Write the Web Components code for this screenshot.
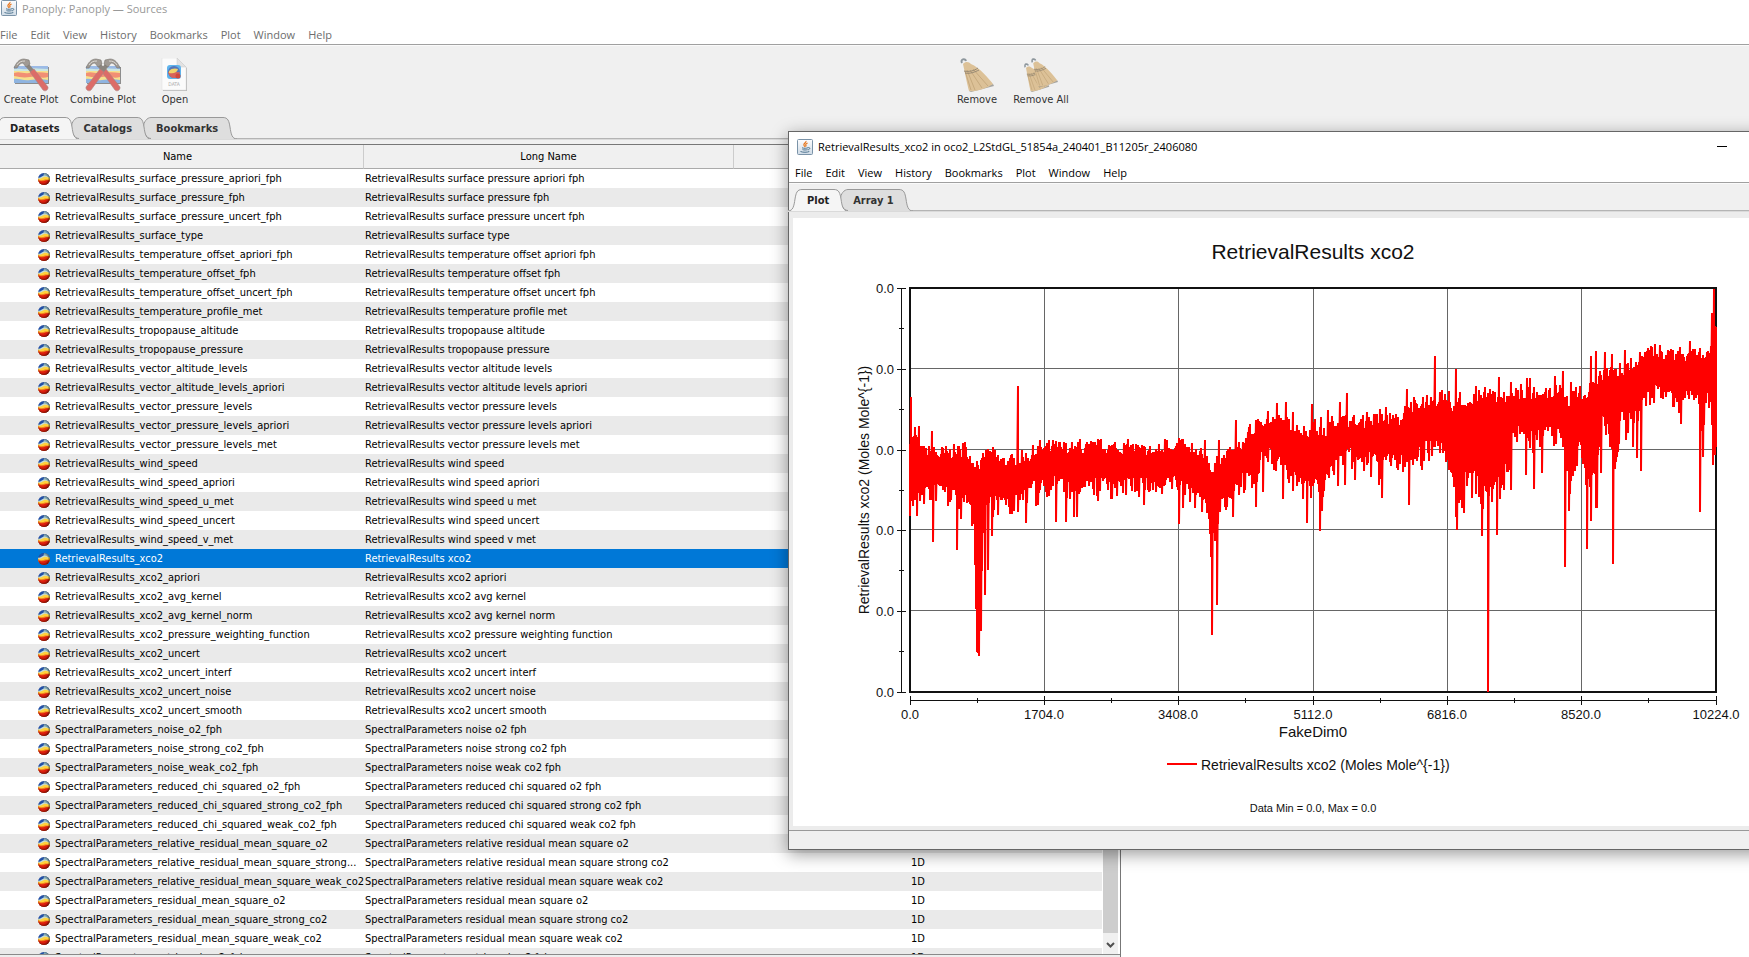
<!DOCTYPE html>
<html lang="en">
<head>
<meta charset="utf-8">
<title>Panoply: Panoply — Sources</title>
<style>
  html, body {
    margin: 0;
    height: 100%;
    overflow: hidden;
    background: #fff;
  }
  body {
    --ui: "Open Sans", "Noto Sans", sans-serif;
    --small: "DejaVu Sans Condensed", "DejaVu Sans", "Noto Sans", sans-serif;
    font: 11px/16px var(--ui);
    color: #000;
  }
</style>
</head>
<body>
<sources-window></sources-window>
<plot-window></plot-window>

<script>
(() => {
  const define = (name, html, init) => {
    const template = document.createElement('template');
    template.innerHTML = html;
    customElements.define(name, class extends HTMLElement {
      constructor() {
        super();
        this.attachShadow({ mode: 'open' });
        this.shadowRoot.appendChild(template.content.cloneNode(true));
      }

      connectedCallback() {
        if (init) init(this, this.shadowRoot);
      }
    });
  };

  define('java-icon', `
    <style>
      :host { display: block; width: 16px; height: 16px; }
      svg { display: block; }
    </style>
    <svg width="16" height="16" viewBox="0 0 16 16" fill="none" aria-hidden="true">
      <defs>
        <linearGradient id="g" x2="0" y2="1">
          <stop offset="0" stop-color="#fdfdfe"/><stop offset="1" stop-color="#cfdbe6"/>
        </linearGradient>
      </defs>
      <rect x=".5" y=".5" width="15" height="15" rx="1" fill="url(#g)" stroke="#7a93a8"/>
      <path d="M9 2c.6 1.800-3.200 2.500-2 4.400l1.200 1.600M10.600 4C8.800 4.700 8 5.600 9.300 7.300" stroke="#e8771d" stroke-width="1.200"/>
      <path d="M5 8.800c2 .7 4.500.6 6-.1M5.500 10.600c1.500.5 3.500.5 5 0M3.500 12.500c2.300 1 6.700 1 8.800 0M11.200 8.600c2.400-.4 2 1.900-.4 2.300" stroke="#4f7590"/>
    </svg>
  `);

  define('menu-strip', `
    <style>
      :host {
        display: block;
        border-bottom: 1px solid #a0a0a0;
        background: #fff;
      }
      nav {
        display: flex;
        gap: 13px;
        height: 20px;
        padding-left: var(--menu-inset, 0);
      }
      button {
        border: 0;
        padding: 0;
        background: none;
        color: inherit;
        font: 11px/22px var(--ui);
        white-space: nowrap;
      }
    </style>
    <nav></nav>
  `, (el, root) => {
    const names = ['File', 'Edit', 'View', 'History', 'Bookmarks', 'Plot', 'Window', 'Help'];
    root.querySelector('nav').innerHTML = names.map(n => `<button type="button">${n}</button>`).join('');
  });

  // Tabs overlap: every tab sits on top of the one that follows it.
  define('tab-strip', `
    <style>
      :host { display: block; }
      .tabs {
        display: flex;
        height: 22px;
        background: linear-gradient(#b4b4b4, #b4b4b4) 0 21px / 100% 1px no-repeat;
        border-bottom: 1px solid #dadada;
      }
      button {
        display: flex;
        position: relative;
        border: 0;
        padding: 0;
        margin: 0 0 0 -8px;
        background: none;
        color: #333;
        font: bold 11px/22px "DejaVu Sans Condensed", "DejaVu Sans", sans-serif;
        --fill: #dedede;
      }
      button:first-child { margin-left: 0; }
      button[aria-selected="true"] { --fill: #f5f5f5; color: #222; }
      span {
        box-sizing: border-box;
        height: 22px;
        padding: 0 5px;
        border-top: 1px solid #999;
        background: var(--fill);
        white-space: nowrap;
        line-height: 22px;
      }
      svg { display: block; flex: none; stroke: #999; }
      .f { fill: var(--fill); stroke: none; }
      .l { fill: none; }
    </style>
    <div class="tabs" role="tablist"></div>
  `, (el, root) => {
    const flare = 'M0 22C5 22 6 17 7 10C8 4 9 .5 14 .5';
    const inner = 'M8 21.500C3 21.500 .5 15 .5 10C.5 5 4 .5 8 .5';
    const names = el.getAttribute('tabs').split(',');
    root.querySelector('.tabs').innerHTML = names.map((name, i) => {
      const left = i === 0
        ? `<svg width="14" height="22"><path class="f" d="${flare}V22z"/><path class="l" d="${flare}"/></svg>`
        : `<svg width="8" height="22"><path class="f" d="${inner}z"/><path class="l" d="${inner}"/></svg>`;
      return `<button type="button" role="tab" aria-selected="${i === 0}" style="z-index:${names.length - i}">
        ${left}<span>${name}</span><svg width="14" height="22"><g transform="matrix(-1 0 0 1 14 0)"><path class="f" d="${flare}V22z"/><path class="l" d="${flare}"/></g></svg></button>`;
    }).join('');
  });

  define('tool-button', `
    <style>
      :host { display: block; flex: none; width: 72px; }
      button {
        display: flex;
        flex-direction: column;
        align-items: center;
        width: 100%;
        border: 0;
        padding: 0;
        background: none;
        color: #333;
        font: 11px/16px var(--small);
        white-space: nowrap;
      }
      ::slotted(svg) { display: block; width: 36px; height: 34px; }
    </style>
    <button type="button"><slot name="icon"></slot><slot></slot></button>
  `);

  const band = `
    <path d="M2 9h34v17H2z" fill="#8d8d8d"/>
    <path d="M1 8h34v17H1z" fill="#f6e08e"/>
    <path d="M1 8h34v3c-5 2-9-1-15 0s-13 1-19 0z" fill="#9cbbe6"/>
    <path d="M1 11c6-1 9 1 16 0s12 0 18 0v2H1z" fill="#cbe6e2"/>
    <path d="M1 15c6-2 9 1 15 0s13-1 19 0v4c-6 2-11-1-18 0s-10 0-16-1z" fill="#f28f74"/>
    <path d="M1 21c5-1 9 2 16 1s13-1 18 0v3H1z" fill="#8fb4e0"/>`;
  const hammer = `
    <path d="M13 9l3-3 5 6-3 3z" fill="#8b857e"/>
    <path d="M17 14l4-3 14 18c.5 3-3 5-5 3z" fill="#dc6c68" stroke="#a98481" stroke-width=".6"/>
    <path d="M1 10C3 5 6 1 11 1l5 1 1 4-4 3-3-4C7 5 6 7 4 10z" fill="#a09a94" stroke="#77736e" stroke-width=".6"/>
    <path d="M4 7c2-3 4-4 8-4" fill="none" stroke="#dad7d2"/>`;
  const broom = `
    <path d="M10 33L34 26l1 2-23 6z" fill="#85837e" opacity=".7"/>
    <path d="M4 6c3-3 6-2 8 0 8 3 18 15 22 20-6 4-16 8-24 7C8 26 6 15 4 6z" fill="#dcc197"/>
    <path d="M8 12l8 20M11 12l12 18M14 11l15 17M6 13l6 19" stroke="#c0a377" stroke-width=".8"/>
    <path d="M5 13c5 1 10 0 14-3M6 15c5 1 10-1 14-3" fill="none" stroke="#847a6b" stroke-width=".8"/>
    <path d="M3 5c-2-4 3-5 4-2" fill="none" stroke="#8e979d" stroke-width="2"/>`;

  define('sources-window', `
    <style>
      :host {
        display: flex;
        flex-direction: column;
        height: 100%;
      }
      header {
        display: flex;
        gap: 5px;
        box-sizing: border-box;
        height: 24px;
        padding-left: 1px;
        color: #999;
        line-height: 18px;
      }
      menu-strip { color: #6d6d6d; }
      .chrome {
        background: #f0f0f0;
        border-top: 1px solid #fafafa;
      }
      .tools {
        display: flex;
        box-sizing: border-box;
        width: 1120px;
        height: 71px;
        padding: 12px 42px 0 0;
        margin-left: -5px;
      }
      .tools .gap { flex: 1; }
      .narrow { width: 64px; }
      .bar { height: 4px; }
      tab-strip { margin-left: -9px; }
      .body {
        box-sizing: border-box;
        width: 1121px;
        flex: 1;
        min-height: 0;
        border-right: 1px solid #777;
      }
    </style>
    <header><java-icon></java-icon><span>Panoply: Panoply — Sources</span></header>
    <menu-strip></menu-strip>
    <div class="chrome">
      <div class="tools">
        <tool-button><svg slot="icon" viewBox="0 0 36 34">${band}${hammer}</svg>Create Plot</tool-button>
        <tool-button><svg slot="icon" viewBox="0 0 36 34">${band}${hammer}<g transform="matrix(-1 0 0 1 36 0)">${hammer}</g></svg>Combine Plot</tool-button>
        <tool-button><svg slot="icon" viewBox="0 0 36 34">
          <path d="M6 1h15l9 9v23H6z" fill="#bbb"/>
          <path d="M5 0h15l9 9v23H5z" fill="#fbfbfb" stroke="#ddd" stroke-width=".5"/>
          <path d="M20 0v9h9z" fill="#e2e2e2" stroke="#c8c8c8" stroke-width=".5"/>
          <rect x="10" y="7" width="14" height="14" rx="3" fill="#5fb4ec"/>
          <circle cx="17" cy="14" r="6" fill="#5575b8"/>
          <path d="M11 14c4-2 8 1 12 0-1 4-3 6-6 6s-5-2-6-6z" fill="#d7635a"/>
          <path d="M12 13c2-3 7-3 9-2-1 4-5 5-9 4z" fill="#f0d26a"/>
          <circle cx="21" cy="18" r="2.500" fill="#d0483c"/>
          <text x="17" y="28" text-anchor="middle" font-size="5" fill="#aaa">DATA</text>
        </svg>Open</tool-button>
        <span class="gap"></span>
        <tool-button class="narrow"><svg slot="icon" viewBox="0 0 36 34">${broom}</svg>Remove</tool-button>
        <tool-button class="narrow"><svg slot="icon" viewBox="0 0 36 34">
          <g transform="translate(0 5) scale(.75 .85)">${broom}</g><g transform="translate(7 0) scale(.8 .86)">${broom}</g>
        </svg>Remove All</tool-button>
      </div>
      <tab-strip tabs="Datasets,Catalogs,Bookmarks"></tab-strip>
      <div class="bar"></div>
    </div>
    <div class="body"><dataset-list></dataset-list></div>
  `);

  const names = `RetrievalResults_surface_pressure_apriori_fph
RetrievalResults_surface_pressure_fph
RetrievalResults_surface_pressure_uncert_fph
RetrievalResults_surface_type
RetrievalResults_temperature_offset_apriori_fph
RetrievalResults_temperature_offset_fph
RetrievalResults_temperature_offset_uncert_fph
RetrievalResults_temperature_profile_met
RetrievalResults_tropopause_altitude
RetrievalResults_tropopause_pressure
RetrievalResults_vector_altitude_levels
RetrievalResults_vector_altitude_levels_apriori
RetrievalResults_vector_pressure_levels
RetrievalResults_vector_pressure_levels_apriori
RetrievalResults_vector_pressure_levels_met
RetrievalResults_wind_speed
RetrievalResults_wind_speed_apriori
RetrievalResults_wind_speed_u_met
RetrievalResults_wind_speed_uncert
RetrievalResults_wind_speed_v_met
RetrievalResults_xco2
RetrievalResults_xco2_apriori
RetrievalResults_xco2_avg_kernel
RetrievalResults_xco2_avg_kernel_norm
RetrievalResults_xco2_pressure_weighting_function
RetrievalResults_xco2_uncert
RetrievalResults_xco2_uncert_interf
RetrievalResults_xco2_uncert_noise
RetrievalResults_xco2_uncert_smooth
SpectralParameters_noise_o2_fph
SpectralParameters_noise_strong_co2_fph
SpectralParameters_noise_weak_co2_fph
SpectralParameters_reduced_chi_squared_o2_fph
SpectralParameters_reduced_chi_squared_strong_co2_fph
SpectralParameters_reduced_chi_squared_weak_co2_fph
SpectralParameters_relative_residual_mean_square_o2
SpectralParameters_relative_residual_mean_square_strong_co2
SpectralParameters_relative_residual_mean_square_weak_co2
SpectralParameters_residual_mean_square_o2
SpectralParameters_residual_mean_square_strong_co2
SpectralParameters_residual_mean_square_weak_co2
SpectralParameters_retrieved_co2_fph`.split('\n');

  define('dataset-list', `
    <style>
      :host {
        display: flex;
        flex-direction: column;
        height: 100%;
        font: 11px/19px var(--small);
      }
      .pane {
        display: flex;
        flex: 1;
        min-height: 0;
        overflow: hidden;
        border-top: 1px solid #777;
        border-bottom: 1px solid #8a8a8a;
      }
      .foot { height: 2px; background: #eee; }
      table {
        flex: 1;
        display: block;
        overflow: hidden;
        border-collapse: collapse;
      }
      thead, tbody { display: block; }
      tr { display: grid; grid-template-columns: 364fr 370fr 368fr; }
      th {
        box-sizing: border-box;
        height: 24px;
        padding: 0;
        border-right: 1px solid #ccc;
        border-bottom: 1px solid #aaa;
        background: #f0f0f0;
        font-weight: normal;
        line-height: 24px;
      }
      th:first-child { padding-right: 8px; }
      td {
        display: flex;
        align-items: center;
        min-width: 0;
        height: 19px;
        padding: 0 0 0 1px;
        white-space: nowrap;
        overflow: hidden;
      }
      td:first-child { padding: 0 0 0 38px; gap: 5px; }
      td:last-child { justify-content: center; padding: 0; }
      tbody tr:nth-child(even) { background: #eaeaea; }
      tbody tr.on { background: #0078d7; color: #fff; }
      svg { flex: none; display: block; }
      .scroll {
        display: flex;
        flex-direction: column;
        width: 15px;
        margin: 0 2px 0 1px;
        background: #f0f0f0;
      }
      .thumb { flex: 1; background: #cdcdcd; margin-top: 500px; }
      .scroll button {
        display: flex;
        align-items: center;
        justify-content: center;
        height: 21px;
        padding: 4px 0 0;
        border: 0;
        background: none;
      }
    </style>
    <svg width="0" height="0" style="position:absolute">
      <defs>
        <radialGradient id="shade" cx=".42" cy=".45" r=".62">
          <stop offset=".6" stop-color="#000" stop-opacity="0"/><stop offset="1" stop-color="#000" stop-opacity=".6"/>
        </radialGradient>
        <clipPath id="disc"><circle cx="6" cy="6" r="6"/></clipPath>
        <symbol id="ball" viewBox="0 0 12 12">
          <g clip-path="url(#disc)">
            <path d="M0 0h12v12H0z" fill="#2350a8"/>
            <path d="M6 0h6v6H5z" fill="#7fa6b4"/>
            <path d="M0 4.500c2 .8 4-1.500 6-2s3 1.500 6 2V8H0z" fill="#c4dcda"/>
            <path d="M0 5.500c3 1 4-1 6-1.500s4 .5 6 1V9H0z" fill="#ffd23c"/>
            <path d="M0 6c3 2 5 1 7 .6s3 .4 5 0V12H0z" fill="#f07a1c"/>
            <path d="M0 7.300c3 1.500 5 1 7 .4s3-.2 5-.2V12H0z" fill="#dc1c0c"/>
          </g>
          <circle cx="6" cy="6" r="6" fill="url(#shade)"/>
        </symbol>
      </defs>
    </svg>
    <div class="pane">
      <table>
        <thead><tr><th scope="col">Name</th><th scope="col">Long Name</th><th scope="col"></th></tr></thead>
        <tbody></tbody>
      </table>
      <div class="scroll">
        <div class="thumb"></div>
        <button type="button" aria-label="Scroll down">
          <svg width="9" height="7" fill="none" stroke="#505050" stroke-width="2"><path d="M1 1l3.500 3.500L8 1"/></svg>
        </button>
      </div>
    </div>
    <div class="foot"></div>
  `, (el, root) => {
    root.querySelector('tbody').innerHTML = names.map((name, i) => {
      const shown = name.replace('relative_residual_mean_square_strong_co2', 'relative_residual_mean_square_strong...');
      // the kind of the upper rows is hidden behind the plot window
      const kind = i > 35 ? '1D' : '';
      return `<tr${name === 'RetrievalResults_xco2' ? ' class="on"' : ''}>
        <td><svg width="12" height="12"><use href="#ball"/></svg>${shown}</td>
        <td>${name.replace(/_/g, ' ')}</td><td>${kind}</td></tr>`;
    }).join('');
  });

  define('plot-window', `
    <style>
      :host {
        position: absolute;
        top: 131px;
        left: 788px;
        right: -89px;
        display: flex;
        flex-direction: column;
        border: 1px solid #666;
        background: #ececec;
        box-shadow: 0 4px 16px rgba(0, 0, 0, .4);
      }
      header {
        display: flex;
        align-items: center;
        height: 30px;
        padding-left: 8px;
        background: #fff;
      }
      header span { flex: 1; padding-left: 5px; }
      header button {
        width: 46px;
        height: 30px;
        padding: 0;
        border: 0;
        background: none;
      }
      header svg { display: block; margin: 0 auto; fill: none; stroke: #000; }
      menu-strip { --menu-inset: 6px; }
      .tabs { padding-top: 5px; background: #f0f0f0; border-top: 1px solid #fafafa; }
      tab-strip { margin-left: -1px; }
      xy-chart { margin: 6px 4px 4px; }
      footer { height: 18px; border-top: 1px solid #999; background: #f0f0f0; }
    </style>
    <header>
      <java-icon></java-icon>
      <span>RetrievalResults_xco2 in oco2_L2StdGL_51854a_240401_B11205r_2406080</span>
      <button type="button" aria-label="Minimize"><svg width="10" height="10"><path d="M0 4.500h10"/></svg></button>
      <button type="button" aria-label="Maximize"><svg width="10" height="10"><path d="M.5 .5h9v9h-9z"/></svg></button>
      <button type="button" aria-label="Close"><svg width="10" height="10"><path d="M0 0l10 10M10 0L0 10"/></svg></button>
    </header>
    <menu-strip></menu-strip>
    <div class="tabs"><tab-strip tabs="Plot,Array 1"></tab-strip></div>
    <xy-chart></xy-chart>
    <footer></footer>
  `);

  // [x, top, bottom] of the solid part of the trace
  const envelope = [
    [910,443,500],[918,443,493],[920,457,490],[930,457,486],[940,458,484],[950,457,488],[960,456,494],
    [964,456,500],[968,458,484],[971,462,490],[974,468,525],[976,466,600],[979,468,640],[981,470,600],[983,466,515],
    [986,460,505],[990,458,496],[1000,464,498],[1010,466,498],[1020,463,494],[1030,460,483],[1040,452,480],
    [1050,452,476],[1060,452,478],[1075,454,487],[1090,452,480],[1100,451,478],[1120,453,482],[1130,452,478],
    [1145,455,478],[1160,455,484],[1170,450,477],[1180,450,477],[1190,456,484],[1200,460,492],[1208,464,502],
    [1211,473,550],[1214,476,520],[1217,468,530],[1220,464,500],[1230,460,497],[1240,452,472],[1250,438,474],
    [1256,434,482],[1260,424,454],[1270,426,448],[1280,425,456],[1290,430,468],[1300,434,478],[1308,438,482],
    [1313,428,480],[1317,432,480],[1321,442,500],[1326,438,475],[1332,428,460],[1340,424,454],[1350,426,448],
    [1360,428,458],[1370,426,450],[1380,424,460],[1390,424,454],[1400,427,456],[1406,414,454],[1415,410,452],
    [1425,407,442],[1440,404,438],[1448,407,448],[1456,414,484],[1462,408,474],[1470,406,460],[1480,402,466],
    [1490,402,475],[1500,400,468],[1507,402,445],[1515,400,422],[1522,399,430],[1535,400,432],[1550,398,426],
    [1560,396,424],[1564,404,440],[1569,408,480],[1573,400,456],[1580,398,440],[1586,404,474],[1590,388,480],
    [1597,386,466],[1602,380,414],[1608,376,424],[1612,374,450],[1617,382,450],[1621,376,412],[1630,372,414],
    [1640,368,410],[1645,360,386],[1655,360,386],[1668,360,388],[1680,364,398],[1690,360,388],[1697,360,387],
    [1702,362,430],[1706,364,390],[1711,358,388],[1713,320,440],[1716,330,440]
  ];
  // [x, y] of single peaks above or below it
  const peaks = [
    [911,397],[915,427],[919,426],[932,431],[963,443],[965,442],[1018,386],[1080,439],[1115,442],[1165,439],
    [1167,440],[1179,438],[1192,443],[1205,440],[1219,440],[1236,420],[1250,424],[1256,420],[1268,411],[1277,403],
    [1286,402],[1293,412],[1312,404],[1321,417],[1328,410],[1340,402],[1347,393],[1367,412],[1380,409],[1386,407],
    [1407,389],[1414,397],[1423,397],[1435,356],[1442,390],[1449,391],[1456,369],[1460,392],[1476,386],[1485,387],
    [1499,377],[1511,382],[1521,384],[1527,378],[1530,378],[1555,376],[1563,371],[1571,382],[1591,356],[1596,351],
    [1605,352],[1612,354],[1620,363],[1625,350],[1631,358],[1640,352],[1651,346],[1655,344],[1660,345],[1668,350],
    [1680,347],[1690,341],[1700,348],[1712,313],[1714,289],
    [917,516],[931,500],[933,542],[948,506],[957,550],[961,519],[972,526],[977,652],[978,653],[981,631],[985,595],
    [988,570],[992,536],[1012,514],[1026,523],[1036,506],[1038,505],[1056,522],[1066,522],[1074,517],[1077,517],
    [1098,501],[1117,496],[1144,505],[1162,494],[1179,524],[1183,508],[1211,557],[1212,635],[1217,605],[1233,517],
    [1245,490],[1256,507],[1263,492],[1283,499],[1293,491],[1307,523],[1320,531],[1322,505],[1334,475],[1338,486],
    [1345,485],[1355,480],[1364,471],[1371,477],[1379,485],[1382,498],[1398,470],[1403,469],[1409,505],[1422,470],
    [1446,462],[1452,473],[1456,517],[1457,530],[1464,513],[1472,498],[1479,497],[1482,536],[1488,692],[1490,483],
    [1497,535],[1500,499],[1503,473],[1511,490],[1526,475],[1534,489],[1542,473],[1554,446],[1565,567],[1569,511],
    [1573,476],[1577,458],[1587,549],[1591,521],[1596,508],[1597,508],[1601,473],[1606,435],[1613,564],[1617,457],
    [1626,440],[1633,447],[1637,458],[1641,471],[1674,407],[1681,424],[1700,512],[1703,457],[1713,465],[1715,440]
  ];

  const trace = () => {
    let seed = 7;
    const rnd = () => (seed = seed * 16807 % 2147483647) / 2147483647;
    const at = {};
    peaks.forEach(([x, y]) => { (at[x] = at[x] || []).push(y); });
    let d = '';
    let k = 0;
    for (let x = 910; x <= 1716; x++) {
      while (k < envelope.length - 2 && envelope[k + 1][0] <= x) k++;
      const [x0, t0, b0] = envelope[k];
      const [x1, t1, b1] = envelope[k + 1];
      const f = (x - x0) / (x1 - x0);
      let top = t0 + (t1 - t0) * f - rnd() ** 2 * 14 + 1;
      let bottom = b0 + (b1 - b0) * f + rnd() ** 3 * 22 - 1;
      if (x > 1448 && x < 1512) bottom += rnd() ** 3 * 40;
      (at[x] || []).forEach(y => {
        top = Math.min(top, y);
        bottom = Math.max(bottom, y);
      });
      d += `${d ? 'L' : 'M'}${x} ${Math.round(top)}V${Math.round(bottom)}`;
    }
    return d;
  };

  define('xy-chart', `
    <style>
      :host { display: block; background: #fff; }
      svg { display: block; width: 100%; height: auto; }
      text { font-family: "Liberation Sans", Arial, sans-serif; fill: #111; }
      .grid { stroke: #666; shape-rendering: crispEdges; }
      .axis { stroke: #111; fill: none; shape-rendering: crispEdges; }
      .mid { text-anchor: middle; }
      .end { text-anchor: end; }
    </style>
    <svg viewBox="793 218 1040 608" role="img" aria-label="RetrievalResults xco2 against FakeDim0"></svg>
  `, (el, root) => {
    const left = 910, right = 1716, top = 288, bottom = 692;
    const xs = [0, 1, 2, 3, 4, 5, 6].map(i => Math.floor(left + (right - left) * i / 6));
    const ys = [0, 1, 2, 3, 4, 5].map(i => Math.round(top + (bottom - top) * i / 5));
    let grid = '';
    let axis = `M901.5 ${top}V${bottom}M${left} 700.5H${right}`;
    let labels = '';
    xs.forEach((x, i) => {
      if (i > 0 && i < 6) grid += `M${x + .5} ${top}V${bottom}`;
      axis += `M${x + .5} 696V705`;
      if (i < 6) axis += `M${x + 67.5} 698V703`;
      labels += `<text class="mid" font-size="13" x="${x}" y="719">${i * 1704}.0</text>`;
    });
    ys.forEach((y, i) => {
      if (i > 0 && i < 5) grid += `M${left} ${y - .5}H${right}`;
      axis += `M897 ${y + .5}H906`;
      if (i < 5) axis += `M899 ${y + 40.5}H904`;
      labels += `<text class="end" font-size="13" x="894" y="${y + 5}">0.0</text>`;
    });
    root.querySelector('svg').innerHTML = `
      <text class="mid" font-size="21" x="1313" y="259">RetrievalResults xco2</text>
      <path class="grid" d="${grid}"/>
      <path class="axis" stroke-width="2" d="M${left} ${top}H${right}V${bottom}H${left}z"/>
      <path class="axis" d="${axis}"/>
      <path d="${trace()}" fill="none" stroke="#f00" stroke-width="2" stroke-linejoin="bevel"/>
      ${labels}
      <text class="mid" font-size="15" x="1313" y="737">FakeDim0</text>
      <text class="mid" font-size="14" transform="translate(869 490) rotate(-90)">RetrievalResults xco2 (Moles Mole^{-1})</text>
      <path d="M1167 764h30" stroke="#f00" stroke-width="2"/>
      <text font-size="14" x="1201" y="770">RetrievalResults xco2 (Moles Mole^{-1})</text>
      <text class="mid" font-size="11" x="1313" y="812">Data Min = 0.0, Max = 0.0</text>`;
  });
})();
</script>
</body>
</html>
